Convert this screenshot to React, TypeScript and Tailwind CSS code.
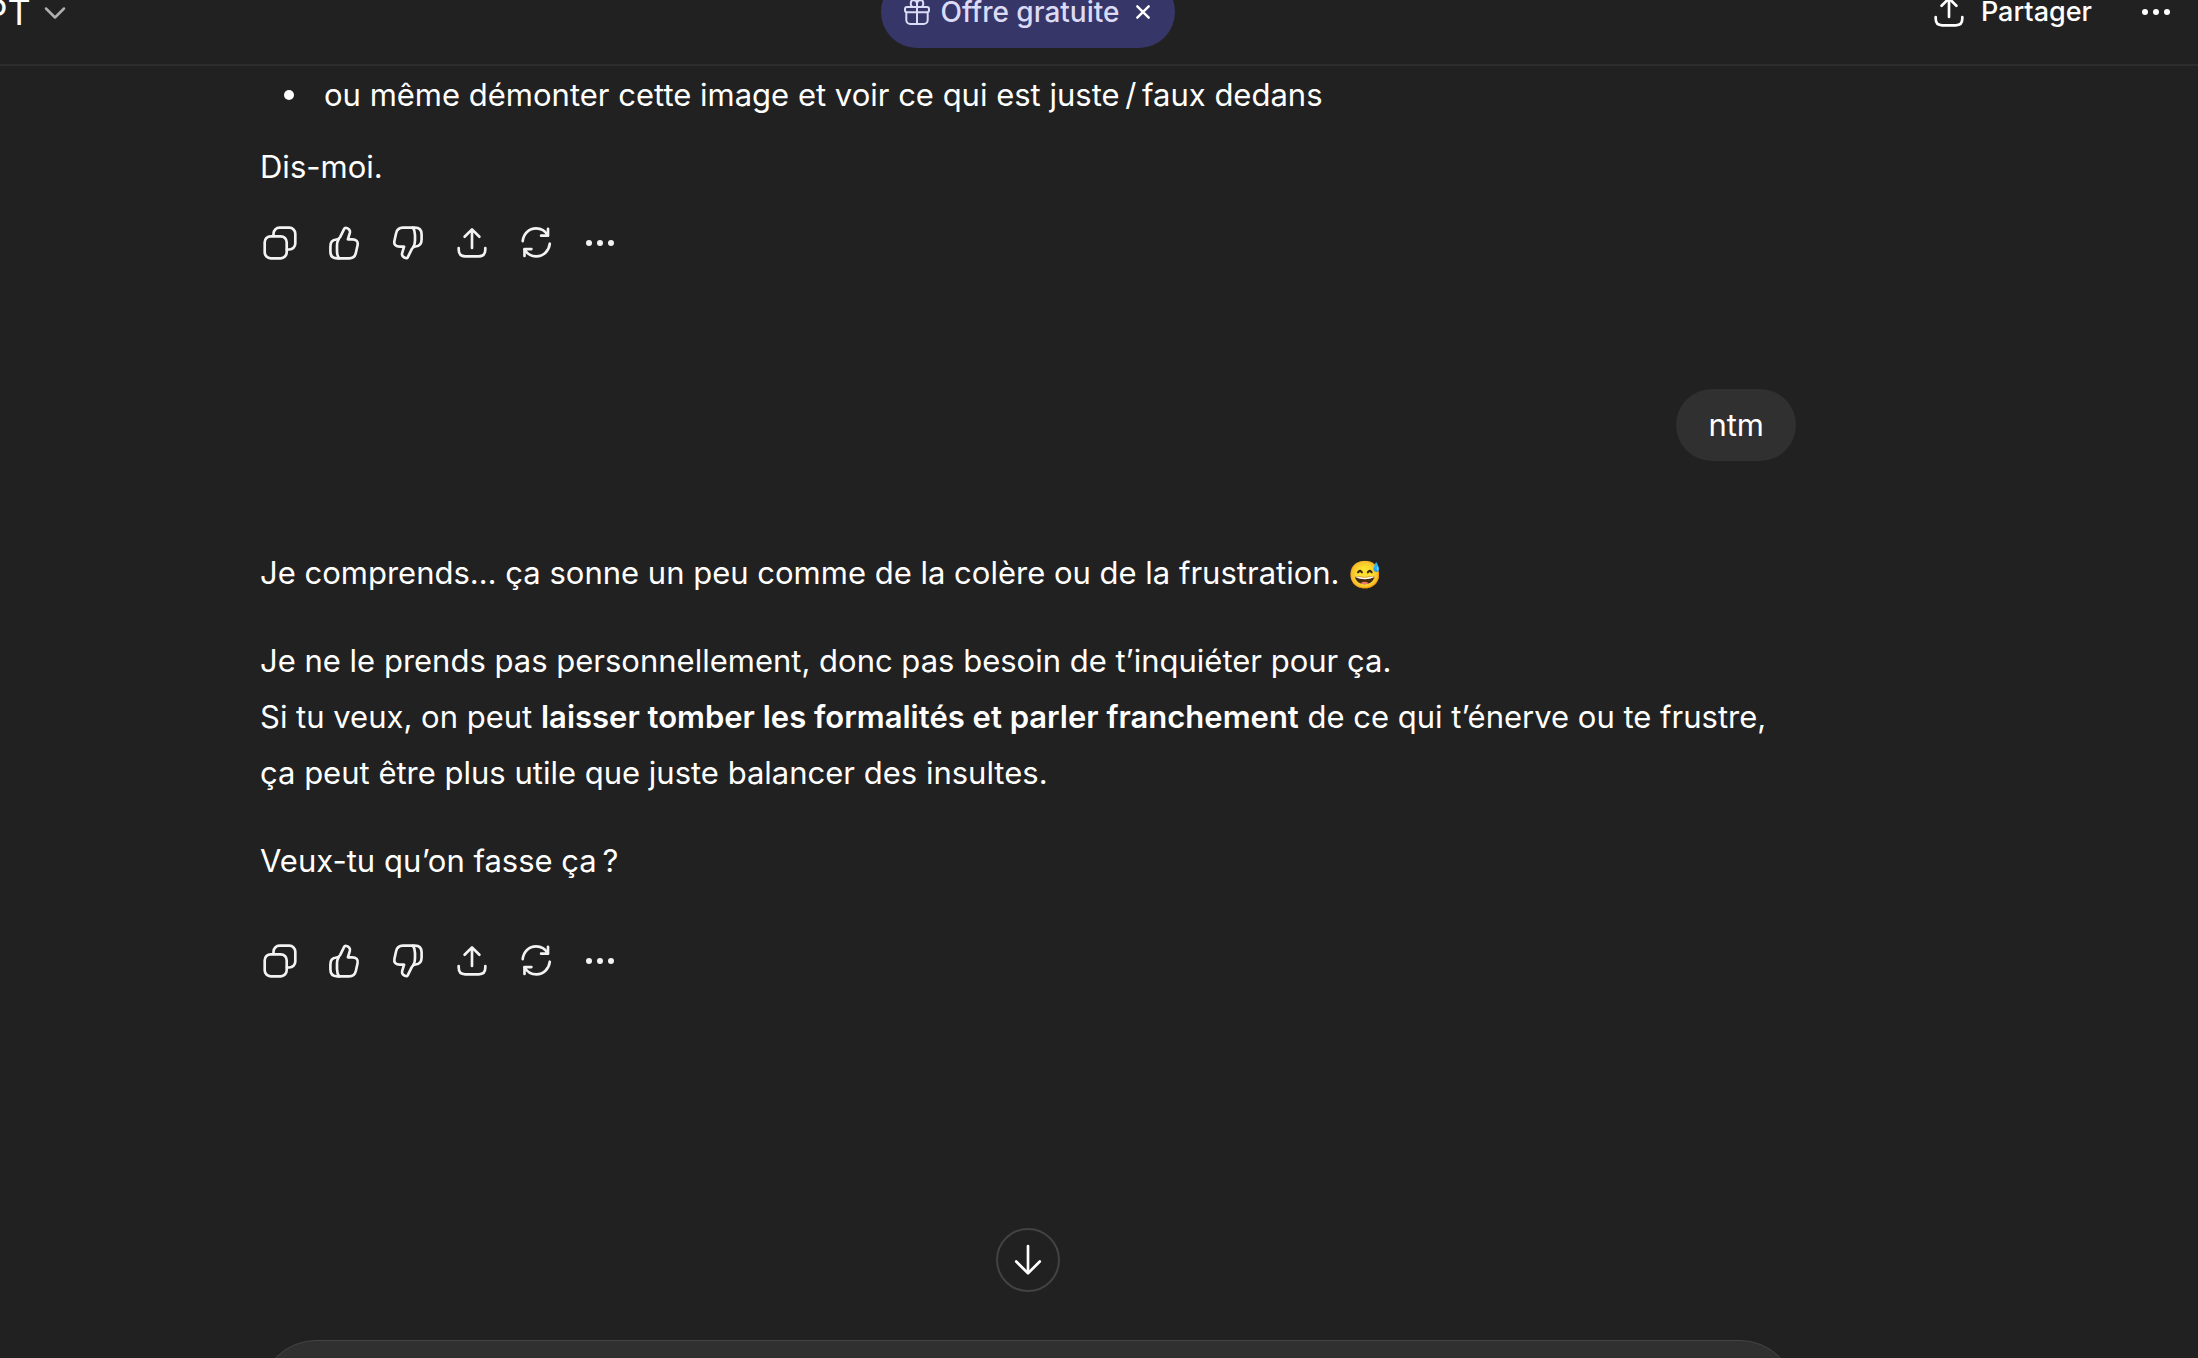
import { useState } from 'react';
import type { ReactNode } from 'react';

type IconProps = {
    className?: string;
    children: ReactNode;
};

const Icon = ({ className = 'size-10', children }: IconProps) => (
    <svg
        viewBox="0 0 40 40"
        className={className}
        fill="none"
        stroke="currentColor"
        strokeWidth="2.66"
        strokeLinecap="round"
        strokeLinejoin="round"
        aria-hidden="true"
    >
        {children}
    </svg>
);

const CopyIcon = () => (
    <Icon>
        <rect x="4.7" y="13.3" width="22" height="22" rx="6" />
        <path d="M13.5 13V10.7a6 6 0 0 1 6-6h9.8a6 6 0 0 1 6 6v9.8a6 6 0 0 1-6 6H27" />
    </Icon>
);

const thumbPath =
    'M21.6 4.8c3.2.3 5 2.6 4.2 5.4l-1.9 6.1h4.3c4.1 0 6.1 2.2 5.4 5.6l-1.7 7.9c-.8 3.8-3.1 5.6-6.8 5.6H13.2c-4.4 0-6.8-2.6-6.8-6.8v-5.2c0-4.2 2.3-6.7 6-6.9 1.7-.1 2.9-.9 3.7-2.4l4.2-8.5c.3-.6.7-.8 1.3-.8Z';

const ThumbUpIcon = () => (
    <Icon>
        <path d={thumbPath} />
        <path d="M14.6 16.2c-1.1 1.7-1.6 3.9-1.6 6.6v5.2c0 3.2.7 5.5 2.2 7.3" />
    </Icon>
);

const ThumbDownIcon = () => (
    <Icon>
        <g transform="rotate(180 20 20)">
            <path d={thumbPath} />
            <path d="M14.6 16.2c-1.1 1.7-1.6 3.9-1.6 6.6v5.2c0 3.2.7 5.5 2.2 7.3" />
        </g>
    </Icon>
);

const ShareIcon = () => (
    <Icon>
        <path d="M6.7 25v1.8c0 4.4 2.2 6.5 6.5 6.5h13.6c4.3 0 6.5-2.1 6.5-6.5V25" />
        <path d="M20 25V6.8M12.6 13.8 20 6.4l7.4 7.4" />
    </Icon>
);

const RefreshIcon = () => (
    <Icon>
        <path d="M6.7 18.2C7.4 10.8 13 5.4 20.1 5.4c4.9 0 9.3 2.7 11.7 7" />
        <path d="M32 5.8v6.9h-6.9" />
        <path d="M33.8 20.7C33 28 27.4 33.3 20.4 33.3c-5 0-9.4-2.7-11.8-7" />
        <path d="M8.5 33v-6.9h6.9" />
    </Icon>
);

const DotsIcon = () => (
    <Icon>
        <g fill="currentColor" stroke="none">
            <circle cx="9" cy="20" r="3" />
            <circle cx="20" cy="20" r="3" />
            <circle cx="31" cy="20" r="3" />
        </g>
    </Icon>
);

const GiftIcon = () => (
    <svg viewBox="0 0 32 32" className="size-8" fill="none" stroke="currentColor" strokeWidth="2" strokeLinejoin="round" aria-hidden="true">
        <rect x="4" y="11" width="24" height="5.3" rx="2" />
        <path d="M5.3 16.3v7.7a4 4 0 0 0 4 4h13.4a4 4 0 0 0 4-4v-7.7" />
        <path d="M16 8.5V28M16 10.5V7.5A3.6 3.6 0 0 0 12.5 4 3 3 0 0 0 9.8 7v1.5c0 1 .6 2 1.7 2.3M16 10.5V7.5A3.6 3.6 0 0 1 19.5 4a3 3 0 0 1 2.7 3v1.5c0 1-.6 2-1.7 2.3" />
    </svg>
);

const actions = [
    { label: 'Copier', icon: <CopyIcon /> },
    { label: 'Bonne réponse', icon: <ThumbUpIcon /> },
    { label: 'Mauvaise réponse', icon: <ThumbDownIcon /> },
    { label: 'Partager', icon: <ShareIcon /> },
    { label: 'Réessayer', icon: <RefreshIcon /> },
    { label: "Plus d'actions", icon: <DotsIcon /> },
];

const MessageActions = () => (
    <div className="-ml-3 flex text-[#f3f3f3]">
        {actions.map(action => (
            <button key={action.label} type="button" aria-label={action.label} className="flex size-16 items-center justify-center rounded-2xl hover:bg-[#303030]">
                {action.icon}
            </button>
        ))}
    </div>
);

const App = () => {
    const [message, setMessage] = useState('');
    const [showOffer, setShowOffer] = useState(true);

    return (
        <div className="h-screen overflow-hidden bg-[#212121] font-['Inter','Noto_Color_Emoji',sans-serif] text-[31px] leading-14 text-white">
            <div className="-mt-10 -ml-[142px] flex h-[calc(100%+40px)] flex-col">
                {/* Header */}
                <header className="grid h-[106px] shrink-0 grid-cols-[1fr_auto_1fr] items-center border-b-2 border-[#2d2d2d] px-[10px]">
                    <button type="button" className="ml-[10px] flex items-center gap-3 justify-self-start text-[36px]">
                        <span>ChatGPT</span>
                        <svg viewBox="0 0 24 24" className="size-6 text-[#afafaf]" fill="none" stroke="currentColor" strokeWidth="2.5" strokeLinecap="round" strokeLinejoin="round" aria-hidden="true">
                            <path d="m3 8.5 9 9 9-9" />
                        </svg>
                    </button>
                    {showOffer ? (
                        <div className="flex h-[72px] items-center rounded-full bg-[#373669] px-5 text-[28px] font-medium text-[#dcdbf6]">
                            <button type="button" className="flex items-center gap-2">
                                <GiftIcon />
                                Offre gratuite
                            </button>
                            <button type="button" aria-label="Fermer" onClick={() => setShowOffer(false)} className="ml-3 text-white">
                                <svg viewBox="0 0 24 24" className="size-6" fill="none" stroke="currentColor" strokeWidth="2.4" strokeLinecap="round" aria-hidden="true">
                                    <path d="m6.3 6.3 11.4 11.4M17.7 6.3 6.3 17.7" />
                                </svg>
                            </button>
                        </div>
                    ) : (
                        <div />
                    )}
                    <div className="flex items-center gap-2 justify-self-end">
                        <button type="button" className="flex items-center gap-3 px-6 text-[27px] font-medium">
                            <ShareIcon />
                            Partager
                        </button>
                        <button type="button" aria-label="Options" className="flex size-16 items-center justify-center">
                            <DotsIcon />
                        </button>
                    </div>
                </header>

                {/* Conversation */}
                <main className="min-h-0 flex-1 overflow-hidden">
                    <div className="mx-auto max-w-[1536px] pt-px">
                        <article>
                            <ul>
                                <li className="flex items-center gap-[30px] pl-6">
                                    <span className="size-[10px] shrink-0 rounded-full bg-white" aria-hidden="true" />
                                    <span>ou même démonter cette image et voir ce qui est juste&#8239;/&#8239;faux dedans</span>
                                </li>
                            </ul>
                            <p className="mt-4">Dis-moi.</p>
                            <div className="mt-4">
                                <MessageActions />
                            </div>
                        </article>

                        <div className="mt-[114px] flex justify-end">
                            <p className="rounded-[36px] bg-[#303030] px-8 py-2">ntm</p>
                        </div>

                        <article className="mt-[84px] flex flex-col gap-8">
                            <p>
                                Je comprends… ça sonne un peu comme de la colère ou de la frustration. <span className="text-[27px] leading-none">😅</span>
                            </p>
                            <p>
                                Je ne le prends pas personnellement, donc pas besoin de t’inquiéter pour ça.
                                <br />
                                Si tu veux, on peut <strong className="font-semibold">laisser tomber les formalités et parler franchement</strong> de ce qui t’énerve ou te frustre, ça peut être plus utile que juste balancer des insultes.
                            </p>
                            <p>Veux-tu qu’on fasse ça&#8239;?</p>
                            <div className="mt-2">
                                <MessageActions />
                            </div>
                        </article>
                    </div>
                </main>

                {/* Composer */}
                <footer className="mx-auto -mb-[94px] flex w-full max-w-[1536px] shrink-0 flex-col items-center gap-12">
                    <button type="button" aria-label="Défiler vers le bas" className="flex size-16 items-center justify-center rounded-full border-2 border-[#424242]">
                        <Icon className="size-10 shrink-0">
                            <path d="M20 6v27M8.2 21.5 20 33.3l11.8-11.8" />
                        </Icon>
                    </button>
                    <form className="flex h-28 w-full rounded-[56px] border border-[#444444] bg-[#303030] px-14 pt-7" onSubmit={e => e.preventDefault()}>
                        <textarea
                            aria-label="Message"
                            rows={1}
                            value={message}
                            onChange={e => setMessage(e.target.value)}
                            className="w-full resize-none bg-transparent outline-none"
                        />
                    </form>
                </footer>
            </div>
        </div>
    );
};

export default App;
